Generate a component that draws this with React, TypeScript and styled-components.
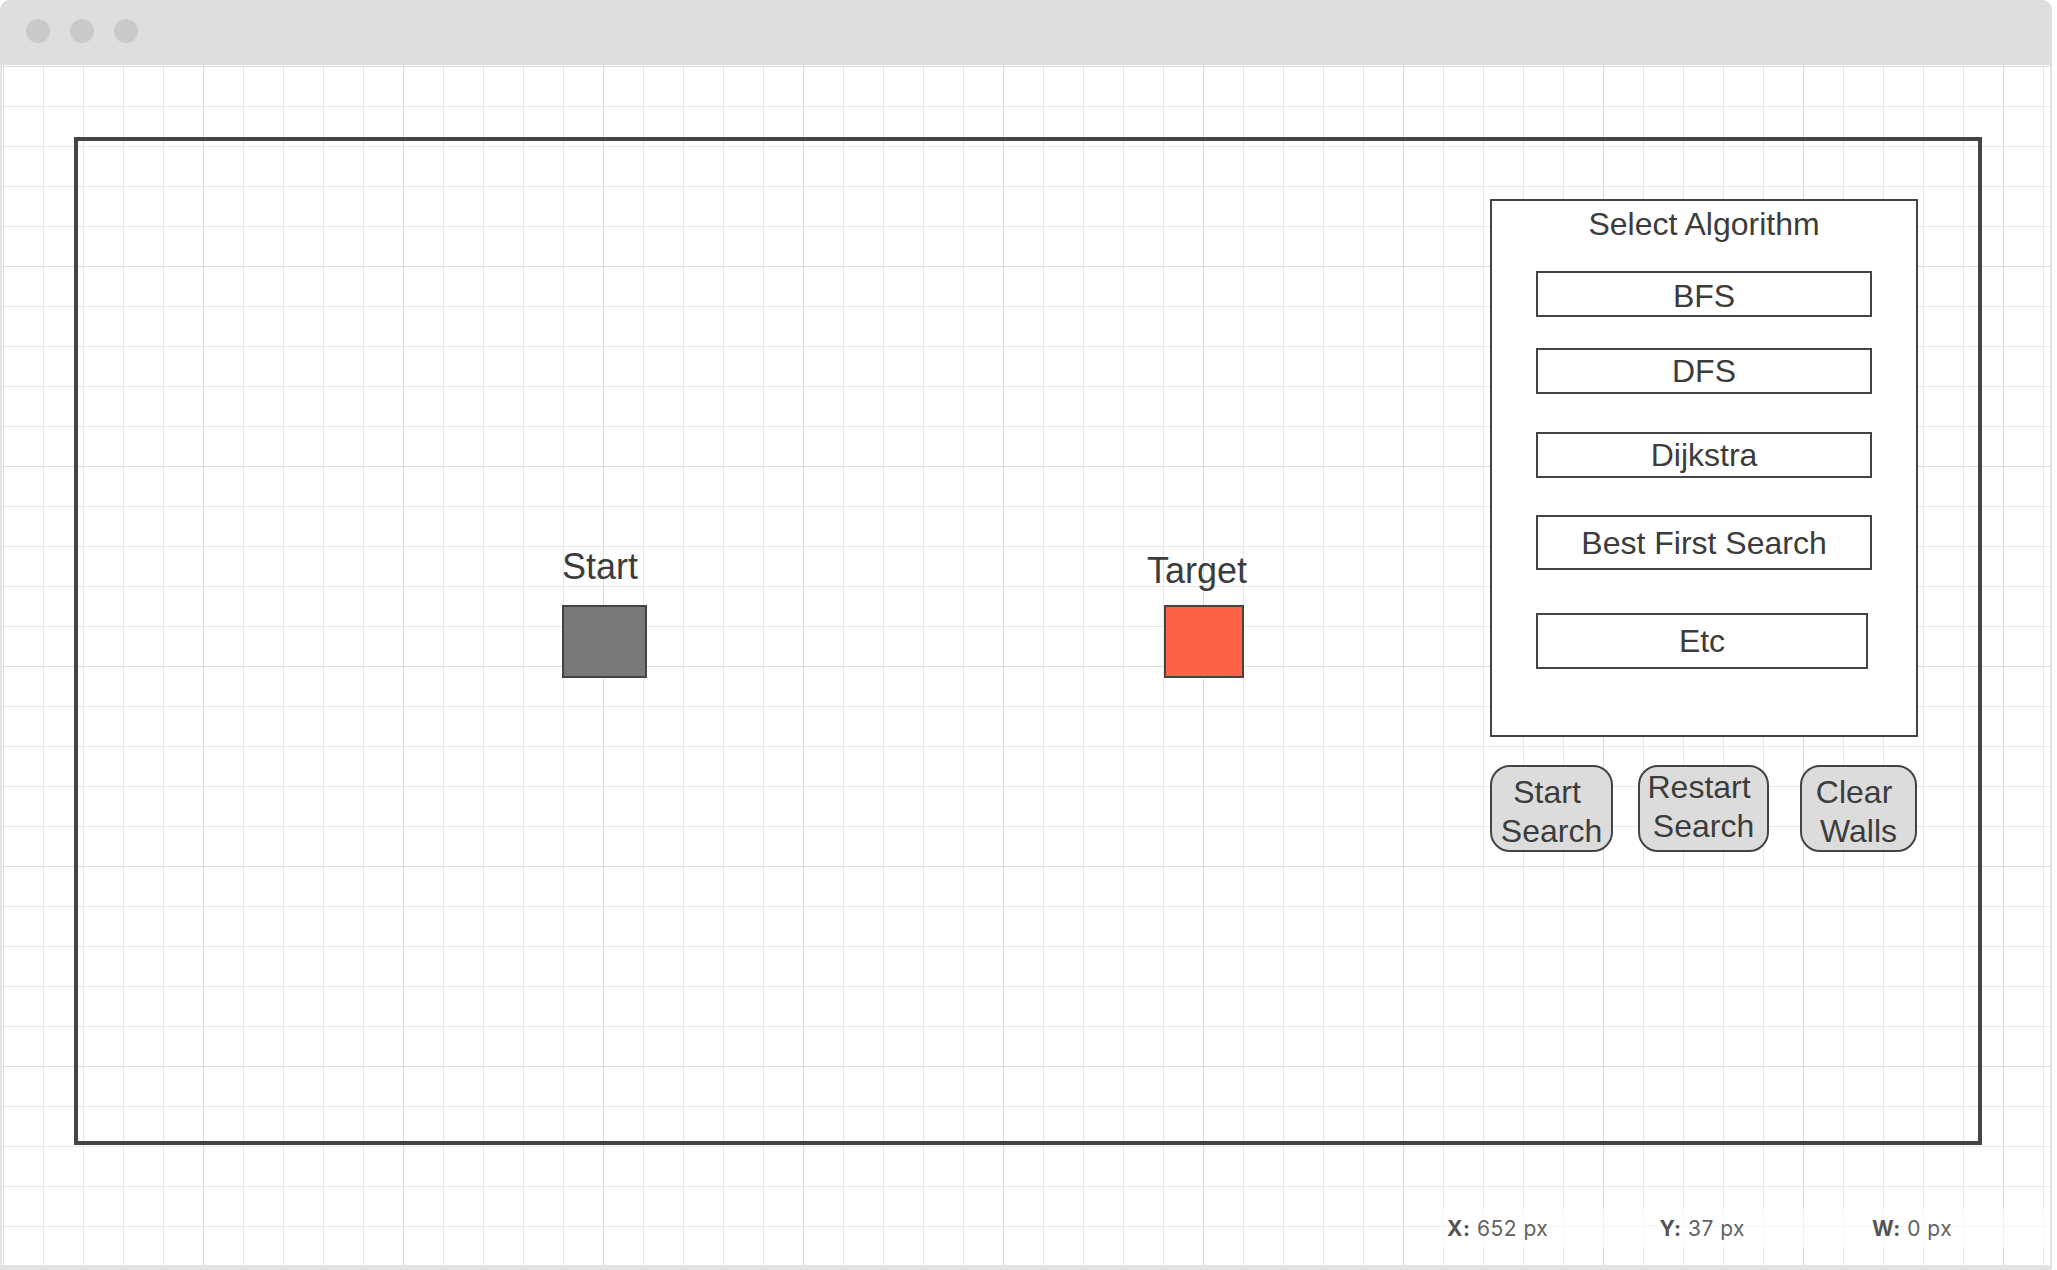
import React from 'react';
import styled, { createGlobalStyle } from 'styled-components';

const GlobalStyle = createGlobalStyle`
  html, body {
    margin: 0;
    padding: 0;
    background: #ffffff;
  }
  body {
    font-family: "Liberation Sans", Arial, sans-serif;
    color: #3c3c3c;
  }
`;

const Window = styled.div`
  width: 2052px;
  height: 1270px;
  display: flex;
  flex-direction: column;
  border-radius: 10px 10px 0 0;
  overflow: hidden;
  background: #e3e3e3;
`;

const TitleBar = styled.div`
  height: 65px;
  box-sizing: border-box;
  flex-shrink: 0;
  background: #dedede;
  display: flex;
  align-items: center;
  gap: 20px;
  padding: 0 0 3px 26px;
`;

const Light = styled.span`
  width: 24px;
  height: 24px;
  border-radius: 50%;
  background: #cacaca;
`;

const Canvas = styled.div`
  position: relative;
  flex: 1;
  margin: 0 2px 5px 2px;
  background-color: #ffffff;
  background-image:
    linear-gradient(to right, #dcdcdc 1px, transparent 1px),
    linear-gradient(to bottom, #dcdcdc 1px, transparent 1px),
    linear-gradient(to right, #e8e8e8 1px, transparent 1px),
    linear-gradient(to bottom, #e8e8e8 1px, transparent 1px);
  background-size: 200px 200px, 200px 200px, 40px 40px, 40px 40px;
  background-position: 1px 1px;
`;

const Frame = styled.div`
  box-sizing: border-box;
  width: 1908px;
  height: 1008px;
  margin: 72px 0 0 72px;
  border: 4px solid #444444;
  display: flex;
  align-items: flex-start;
`;

const NodeGroup = styled.div<{ $left: number; $top: number }>`
  display: flex;
  flex-direction: column;
  align-items: flex-start;
  margin-left: ${({ $left }) => $left}px;
  margin-top: ${({ $top }) => $top}px;
`;

const NodeLabel = styled.div`
  font-size: 36px;
  line-height: 40px;
  color: #3c3c3c;
  white-space: nowrap;
`;

const NodeSquare = styled.div<{ $fill: string; $w: number; $gap: number; $inset: number }>`
  box-sizing: border-box;
  width: ${({ $w }) => $w}px;
  height: 73px;
  margin-top: ${({ $gap }) => $gap}px;
  margin-left: ${({ $inset }) => $inset}px;
  background: ${({ $fill }) => $fill};
  border: 2px solid #444444;
`;

const SideColumn = styled.div`
  width: 428px;
  margin: 58px 60px 0 auto;
  display: flex;
  flex-direction: column;
`;

const AlgoPanel = styled.div`
  box-sizing: border-box;
  height: 538px;
  border: 2px solid #444444;
  background: #ffffff;
  display: flex;
  flex-direction: column;
`;

const PanelTitle = styled.div`
  margin-top: 5px;
  font-size: 32px;
  line-height: 36px;
  text-align: center;
  color: #3c3c3c;
  white-space: nowrap;
`;

const AlgoList = styled.div`
  display: flex;
  flex-direction: column;
  align-items: flex-start;
  padding-left: 44px;
`;

const AlgoOption = styled.div<{ $gap: number; $h: number; $w: number; $dy?: number }>`
  box-sizing: border-box;
  width: ${({ $w }) => $w}px;
  height: ${({ $h }) => $h}px;
  margin-top: ${({ $gap }) => $gap}px;
  padding-top: ${({ $dy }) => ($dy ? $dy * 2 : 0)}px;
  border: 2px solid #444444;
  background: #ffffff;
  display: flex;
  align-items: center;
  justify-content: center;
  font-size: 32px;
  line-height: 36px;
  color: #3c3c3c;
  white-space: nowrap;
`;

const ButtonRow = styled.div`
  display: flex;
  margin-top: 28px;
`;

const ActionButton = styled.button<{ $w: number; $gap: number; $dy: number }>`
  box-sizing: border-box;
  width: ${({ $w }) => $w}px;
  height: 87px;
  margin: 0 0 0 ${({ $gap }) => $gap}px;
  padding: ${({ $dy }) => ($dy > 0 ? $dy * 2 : 0)}px 0 ${({ $dy }) => ($dy < 0 ? -$dy * 2 : 0)}px;
  border: 2px solid #444444;
  border-radius: 20px;
  background: #dcdcdc;
  color: #3c3c3c;
  font-family: "Liberation Sans", Arial, sans-serif;
  font-size: 32px;
  line-height: 39px;
  text-align: center;
  white-space: nowrap;
  cursor: pointer;
`;

const StatusBar = styled.div`
  position: absolute;
  left: 1440px;
  right: 0;
  bottom: 17px;
  height: 39px;
  display: flex;
  align-items: center;
  padding-left: 5px;
  background: rgba(255, 255, 255, 0.6);
  font-family: Inter, "Liberation Sans", sans-serif;
  font-size: 21px;
  letter-spacing: 0.5px;
  color: #626262;
`;

const StatusItem = styled.div`
  width: 212.5px;
  flex-shrink: 0;
  white-space: nowrap;
`;

const StatusKey = styled.b`
  font-weight: 700;
  color: #555555;
`;

const algorithms = [
  { label: 'BFS', gap: 29, h: 46, w: 336, dy: 2 },
  { label: 'DFS', gap: 31, h: 46, w: 336 },
  { label: 'Dijkstra', gap: 38, h: 46, w: 336 },
  { label: 'Best First Search', gap: 37, h: 55, w: 336 },
  { label: 'Etc', gap: 43, h: 56, w: 332 },
];

const actions = [
  { top: 'Start', bottom: 'Search', w: 123, gap: 0, dy: 3 },
  { top: 'Restart', bottom: 'Search', w: 131, gap: 25, dy: -2 },
  { top: 'Clear', bottom: 'Walls', w: 117, gap: 31, dy: 3 },
];

const status = [
  { key: 'X:', value: '652 px' },
  { key: 'Y:', value: '37 px' },
  { key: 'W:', value: '0 px' },
];

export default function App() {
  return (
    <>
      <GlobalStyle />
      <Window>
        <TitleBar>
          <Light />
          <Light />
          <Light />
        </TitleBar>
        <Canvas>
          <Frame>
            <NodeGroup $left={484} $top={406}>
              <NodeLabel>Start</NodeLabel>
              <NodeSquare $fill="#797979" $w={85} $gap={18} $inset={0} />
            </NodeGroup>
            <NodeGroup $left={500} $top={410}>
              <NodeLabel>Target</NodeLabel>
              <NodeSquare $fill="#ff6347" $w={80} $gap={14} $inset={17} />
            </NodeGroup>
            <SideColumn>
              <AlgoPanel>
                <PanelTitle>Select Algorithm</PanelTitle>
                <AlgoList>
                  {algorithms.map((a) => (
                    <AlgoOption key={a.label} $gap={a.gap} $h={a.h} $w={a.w} $dy={a.dy}>
                      {a.label}
                    </AlgoOption>
                  ))}
                </AlgoList>
              </AlgoPanel>
              <ButtonRow>
                {actions.map((b) => (
                  <ActionButton key={b.top} $w={b.w} $gap={b.gap} $dy={b.dy}>
                    {b.top}&nbsp;
                    <br />
                    {b.bottom}
                  </ActionButton>
                ))}
              </ButtonRow>
            </SideColumn>
          </Frame>
          <StatusBar>
            {status.map((s) => (
              <StatusItem key={s.key}>
                <StatusKey>{s.key}</StatusKey> {s.value}
              </StatusItem>
            ))}
          </StatusBar>
        </Canvas>
      </Window>
    </>
  );
}
